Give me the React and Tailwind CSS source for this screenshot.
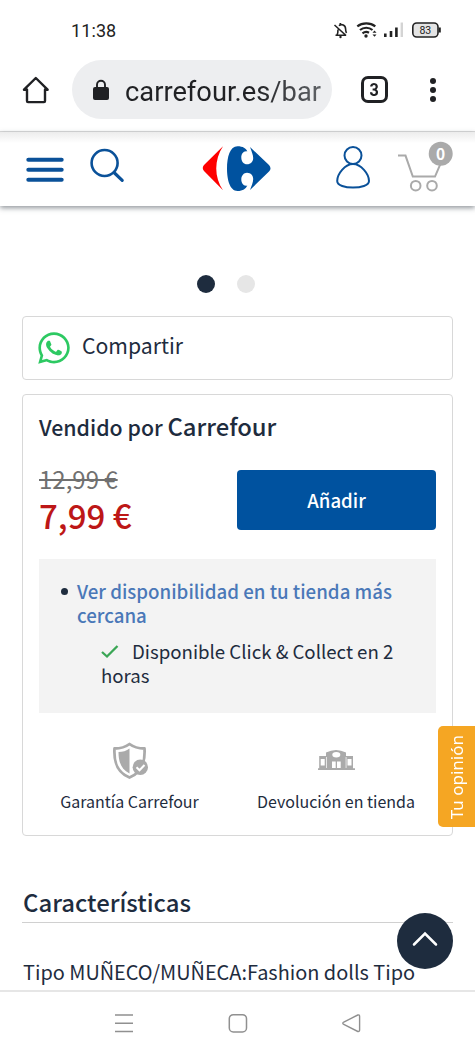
import React from 'react';
import { FaWhatsapp } from 'react-icons/fa';

const StatusBar = () => (
    <div className="flex h-[60px] items-center justify-between pr-[34px] pl-[71px]">
        <span className="mt-[2px] font-['Roboto'] text-[18px] leading-none tracking-[0.1px] text-[#222]">11:38</span>
        <svg width="108" height="20" viewBox="333 20 108 20" fill="none" stroke="#222">
            {/* muted bell */}
            <path d="M335.5 35.2h10.6M337 35c1-1.6 1-3 1-5.500M339 25.800c2.500-2.600 6.600-.6 6.600 3.200 0 1.800.3 3 .9 4M340.300 24.300V23M334.500 25l11.500 10.500" strokeWidth="1.600" />
            <circle cx="340.500" cy="37" r="1.200" fill="#222" stroke="none" />
            <path d="M357.300 26.300c5-4 13-4 18 0M360 30c3.500-3 9-3 12.500 0M362.500 33.300c2-1.600 4.500-1.800 6.500-.6" strokeWidth="2.200" />
            <circle cx="366" cy="36" r="1.700" fill="#222" stroke="none" />
            <path d="M372.500 32.700l2-2.200 2 2.200zM372.500 34.500l2 2.200 2-2.200z" fill="#222" stroke="none" />
            <path d="M385.300 33.500V37M391 31v6M396.400 27.500V37" strokeWidth="2.600" />
            <path d="M401.800 22.500V37" stroke="#d4d4d4" strokeWidth="2.400" />
            <rect x="412.800" y="23" width="25.200" height="14" rx="4" fill="#e4e4e4" strokeWidth="1.600" />
            <path d="M439.700 27.500v5" strokeWidth="2.200" />
            <text x="425.300" y="33.900" textAnchor="middle" fill="#222" stroke="none" className="font-['Roboto'] text-[10.500px]">83</text>
        </svg>
    </div>
);

const BrowserBar = () => (
    <div className="flex h-[72px] items-start border-b border-[#dcdcdc] pl-[22px]">
        <svg className="mt-[16px]" width="28" height="28" viewBox="22 76 28 28" fill="none" stroke="#202124" strokeWidth="2.400" strokeLinejoin="round" strokeLinecap="round">
            <path d="M27 89.500v11.600q0 1 1 1h16q1 0 1-1V89.500M24 89.700l11.800-11.700 11.800 11.700M24 89.800h3M45 89.800h2.600" />
        </svg>
        <div className="ml-[22px] flex h-[59px] w-[260px] items-center rounded-full bg-[#edeef0] pl-[20px]">
            <svg width="18" height="22" viewBox="0 0 18 22">
                <rect x="1" y="8" width="16" height="13" rx="2" fill="#202124" />
                <path d="M5 9V5.700a4 4 0 0 1 8 0V9" fill="none" stroke="#202124" strokeWidth="1.900" />
            </svg>
            <span className="mt-[5px] ml-[15px] bg-linear-to-r from-[#202124] from-65% to-[#606367] bg-clip-text font-['Roboto'] text-[27.300px] leading-[34px] text-transparent">
                carrefour.es/bar
            </span>
        </div>
        <div className="mt-[16px] ml-[29px] flex h-[27px] w-[27px] items-center justify-center rounded-[7px] border-[3px] border-[#202124] font-['Roboto'] text-[18px] leading-none font-bold text-[#202124]">
            <span className="scale-x-90">3</span>
        </div>
        <div className="mt-[18px] ml-[42px] flex flex-col gap-[3px]">
            <i className="h-[6px] w-[6px] rounded-full bg-[#202124]" />
            <i className="h-[6px] w-[6px] rounded-full bg-[#202124]" />
            <i className="h-[6px] w-[6px] rounded-full bg-[#202124]" />
        </div>
    </div>
);

const SiteHeader = () => (
    <header className="flex h-[74px] items-start bg-linear-to-b from-[#ececec] to-white to-15% pl-[26px] shadow-[0_2px_5px_rgba(40,50,60,0.5)]">
        <svg className="mt-[24px]" width="39" height="28" viewBox="26 156 39 28" stroke="#0a5199" strokeWidth="4" strokeLinecap="round">
            <path d="M28.300 159.700h33.400M28.300 169.700h33.400M28.300 179.700h33.400" />
        </svg>
        <svg className="mt-[15px] ml-[24px]" width="37" height="38" viewBox="89 147 37 38" fill="none" stroke="#0a5199" strokeWidth="2.600" strokeLinecap="round">
            <circle cx="104.600" cy="163" r="13" />
            <path d="M114.500 173l7.700 7.300" strokeWidth="3.200" />
        </svg>
        <svg className="mt-[13px] ml-[76px]" width="70" height="47" viewBox="202 145 70 47">
            <path fill="#fe0000" d="M223 146.300L204 165q-2.500 3 0 6l19 19.300C214 177 214 160 223 146.300z" />
            <path fill="#00529f" d="M237.500 146.300C243 146.300 246 148.500 247.300 151.500C243.500 150.500 241.300 154 241.300 157.500C241.300 161.500 243.800 164.300 247 164.300C250.800 164.300 253.200 161.500 253.200 158C253.200 155 251.500 151 250 147L269 165Q272 168.500 269 171.500L250 190C251.500 186 253.200 182 253.200 179C253.200 175.500 250.800 172.700 247 172.700C243.800 172.700 241.300 175.500 241.300 179.500C241.300 183 243.500 186.500 247.300 185.500C246 188.500 243 191 237.500 191C230 191 227 180 227 168.500C227 157 230 146.300 237.500 146.300z" />
        </svg>
        <svg className="mt-[13px] ml-[62px]" width="38" height="46" viewBox="334 145 38 46" fill="none" stroke="#0a5199" strokeWidth="2">
            <circle cx="353" cy="155.500" r="8.500" />
            <path d="M353 164c-8 0-15.800 10-15.800 17 0 4.500 8 6.500 15.800 6.500s16-2 16-6.500c0-7-8-17-16-17z" />
        </svg>
        <svg className="mt-[8px] ml-[24px]" width="58" height="54" viewBox="396 140 58 54" fill="none" stroke="#aaa" strokeWidth="2">
            <path d="M398 155.600h7.500l7.300 21H435l6-14" />
            <circle cx="415.700" cy="185.700" r="4.800" />
            <circle cx="432" cy="185.700" r="4.800" />
            <circle cx="440.700" cy="153.700" r="12" fill="#aaa" stroke="none" />
            <text x="440.700" y="159.500" textAnchor="middle" fill="#fff" stroke="none" className="font-['Noto_Sans_CJK_SC'] text-[15.500px] font-bold">0</text>
        </svg>
    </header>
);

const ShareBox = () => (
    <div className="mt-[23px] flex h-[64px] items-center rounded-[4px] border border-[#d8d8d8] pl-[13px]">
        <FaWhatsapp className="h-[36px] w-[36px] text-[#2dc962]" />
        <span className="-mt-[7px] ml-[10px] text-[21.200px] leading-[30px]">Compartir</span>
    </div>
);

const Benefits = () => (
    <div className="mt-[28px] -mr-[16px] flex text-center text-[16px] leading-[22px]">
        <div className="flex w-[181px] shrink-0 flex-col items-center">
            <svg width="38" height="40" viewBox="110 741 38 40" fill="none">
                <path d="M128.500 744c4.500 3.500 9.500 4.500 15 4.500.8 14-2.500 24-15 29-12.500-5-15.800-15-15-29 5.500 0 10.500-1 15-4.500z" stroke="#aaa" strokeWidth="2.800" strokeLinejoin="round" />
                <path d="M128.500 748.500v25c-8-4-11-11-11-21.500 4 0 8-1 11-3.500z" fill="#aaa" />
                <circle cx="139.300" cy="767.300" r="7.700" fill="#aaa" />
                <path d="M135.500 767.300l3 3 5-5.300" stroke="#fff" strokeWidth="2" />
            </svg>
            <span className="mt-[9px]">Garantía Carrefour</span>
        </div>
        <div className="flex w-[232px] shrink-0 flex-col items-center">
            <svg width="38" height="40" viewBox="317 741 38 40">
                <path fill="#aaa" d="M318 770v-1.800h1.200v-12.300h6.800v-3.300q10-5 20 0v3.300h7v12.300h2v1.800z" />
                <ellipse cx="336.300" cy="754.700" rx="4" ry="2.700" fill="#fff" />
                <path fill="#fff" d="M320.700 759h4v6.500h-4zM347.500 759h4v6.500h-4zM332 761.500h3.700v6.500H332zM337 761.500h3.700v6.500H337zM326 757h.7v11h-.7zM345.700 757h.7v11h-.7z" />
            </svg>
            <span className="mt-[9px]">Devolución en tienda</span>
        </div>
    </div>
);

const ProductCard = () => (
    <div className="mt-[14px] h-[442px] rounded-[4px] border border-[#d8d8d8] px-[16px] pt-[14px]">
        <h2 className="text-[21.300px] leading-[34px] font-medium whitespace-nowrap">
            Vendido por <span className="text-[23.800px]">Carrefour</span>
        </h2>
        <div className="mt-[24px] flex h-[63px] justify-between">
            <div className="-mt-px">
                <p className="h-[32px] text-[24px] leading-[24px] text-[#707070] line-through decoration-2">12,99 €</p>
                <p className="text-[33px] leading-[32px] font-medium text-[#bd1717]">7,99 €</p>
            </div>
            <button className="mt-[2px] h-[60px] w-[199px] rounded-[4px] bg-[#00529f] text-[18.600px] font-medium text-white">Añadir</button>
        </div>
        <div className="mt-[28px] h-[154px] bg-[#f3f3f3] pt-[20px] pl-[38px]">
            <div className="relative text-[18.700px] leading-[24px] font-medium text-[#4a78b8]">
                <i className="absolute top-[9px] -left-[16px] h-[7px] w-[7px] rounded-full bg-[#1e2c3e]" />
                Ver disponibilidad en tu tienda más
                <br />
                cercana
            </div>
            <div className="mt-[12px] pl-[24px] text-[18.650px] leading-[24px]">
                <svg className="mr-[13px] inline-block align-baseline" width="18" height="15" viewBox="0 0 18 15" fill="none" stroke="#3aa655" strokeWidth="2.300">
                    <path d="M1 8l5 4.500L16.500 2" />
                </svg>
                Disponible Click &amp; Collect en 2
                <br />
                horas
            </div>
        </div>
        <Benefits />
    </div>
);

const NavBar = () => (
    <nav className="flex h-[66px] items-start justify-center gap-[94px] border-t-2 border-[#e6e6e6] bg-white pt-[21px]">
        <svg width="20" height="22" viewBox="0 0 20 22" stroke="#909090" strokeWidth="1.500">
            <path d="M1 2h18M1 10.300h18M1 18.600h18" />
        </svg>
        <svg width="20" height="22" viewBox="0 0 20 22" fill="none" stroke="#909090" strokeWidth="1.500">
            <rect x="1.300" y="1.700" width="17.200" height="17.200" rx="4" />
        </svg>
        <svg width="20" height="22" viewBox="0 0 20 22" fill="none" stroke="#909090" strokeWidth="1.400">
            <path d="M15.800 2L1.800 9q-2 1.200 0 2.500l14 7q1.800.4 1.800-1.500V3.500q0-2-1.800-1.500z" />
        </svg>
    </nav>
);

const App = () => {
    return (
        <div className="relative h-[1056px] w-[475px] overflow-hidden bg-white font-['Noto_Sans_CJK_SC',sans-serif] text-[#1e2c3e]">
            <StatusBar />
            <BrowserBar />
            <SiteHeader />
            <main className="h-[784px] px-[22px] pt-[69px]">
                <div className="flex justify-center gap-[22px] pr-[23px]">
                    <i className="h-[18px] w-[18px] rounded-full bg-[#1e2c3e]" />
                    <i className="h-[18px] w-[18px] rounded-full bg-[#e6e6e6]" />
                </div>
                <ShareBox />
                <ProductCard />
                <h2 className="mt-[46px] h-[41px] border-b border-[#d0d0d0] pl-px text-[23.900px] leading-[40px] font-medium">Características</h2>
                <p className="mt-[34px] pl-px text-[19.900px] leading-[30px] whitespace-nowrap">Tipo MUÑECO/MUÑECA:Fashion dolls Tipo</p>
            </main>
            <NavBar />
            <div className="absolute top-[726px] right-0 flex h-[101px] w-[37px] items-center justify-center rounded-l-[5px] bg-[#f5a623]">
                <span className="mt-[2px] rotate-180 font-['Noto_Sans'] text-[17px] leading-none text-white [writing-mode:vertical-rl]">Tu opinión</span>
            </div>
            <button className="absolute top-[913px] right-[22px] flex h-[56px] w-[56px] items-center justify-center rounded-full bg-[#1e2c3e]">
                <svg className="-mt-[4px]" width="28" height="18" viewBox="0 0 28 18" fill="none" stroke="#fff" strokeWidth="2.500" strokeLinecap="round">
                    <path d="M3 14.500L14 3.500l11 11" />
                </svg>
            </button>
        </div>
    );
};

export default App;
